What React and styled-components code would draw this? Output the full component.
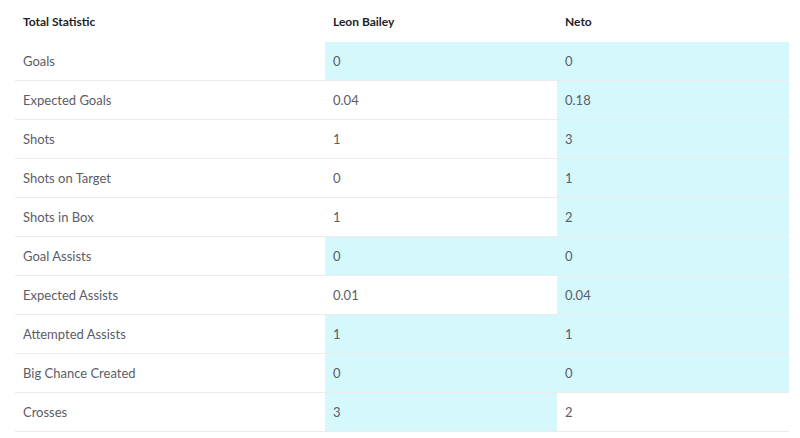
import React from 'react'
import styled, { createGlobalStyle } from 'styled-components'

const Global = createGlobalStyle`
  html, body {
    margin: 0;
    padding: 0;
    background: #fff;
  }
  body {
    font-family: Lato, "Open Sans", "Liberation Sans", sans-serif;
  }
`;

const Wrapper = styled.div`
  width: 800px;
  height: 438px;
  padding: 0 11px 0 15px;
  box-sizing: border-box;
  overflow: hidden;
`;

const Table = styled.div`
  display: grid;
  grid-template-columns: 310px 232px 232px;
`;

const HeadCell = styled.div`
  height: 42px;
  display: flex;
  align-items: center;
  padding: 0 8px;
  font-size: 12px;
  font-weight: 700;
  color: #1e1e28;
`;

const Cell = styled.div`
  height: 38px;
  display: flex;
  align-items: center;
  padding: 0 8px;
  font-size: 13px;
  color: #5c5c66;
  border-bottom: 1px solid #ebebeb;
  background: ${(p) => (p.$best ? '#d4f8fb' : '#fff')};
`;

const stats = [
  ['Goals', '0', '0'],
  ['Expected Goals', '0.04', '0.18'],
  ['Shots', '1', '3'],
  ['Shots on Target', '0', '1'],
  ['Shots in Box', '1', '2'],
  ['Goal Assists', '0', '0'],
  ['Expected Assists', '0.01', '0.04'],
  ['Attempted Assists', '1', '1'],
  ['Big Chance Created', '0', '0'],
  ['Crosses', '3', '2'],
];

const App = () => {
  return (
    <Wrapper>
      <Global />
      <Table>
        <HeadCell>Total Statistic</HeadCell>
        <HeadCell>Leon Bailey</HeadCell>
        <HeadCell>Neto</HeadCell>
        {stats.map(([label, a, b]) => {
          const x = parseFloat(a);
          const y = parseFloat(b);
          return (
            <React.Fragment key={label}>
              <Cell>{label}</Cell>
              <Cell $best={x >= y}>{a}</Cell>
              <Cell $best={y >= x}>{b}</Cell>
            </React.Fragment>
          );
        })}
      </Table>
    </Wrapper>
  );
};

export default App
